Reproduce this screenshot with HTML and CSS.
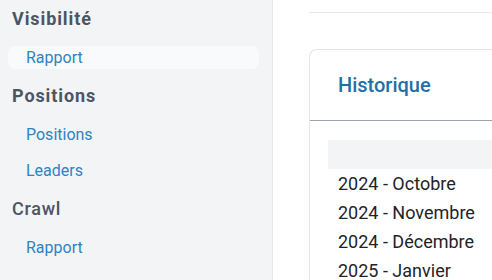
FILE: index.html
```html
<!DOCTYPE html>
<html lang="fr">
<head>
<meta charset="utf-8">
<link rel="stylesheet" href="styles.css">
</head>
<body>
<div class="layout">
  <aside class="sidebar">
    <div class="group-title">Visibilité</div>
    <a class="nav-item active">Rapport</a>
    <div class="group-title">Positions</div>
    <a class="nav-item">Positions</a>
    <a class="nav-item">Leaders</a>
    <div class="group-title light">Crawl</div>
    <a class="nav-item">Rapport</a>
  </aside>
  <main class="main">
    <div class="topbar"></div>
    <section class="card">
      <div class="card-header">Historique</div>
      <div class="card-body">
        <div class="table-head"></div>
        <div class="row">2024 - Octobre</div>
        <div class="row">2024 - Novembre</div>
        <div class="row">2024 - Décembre</div>
        <div class="row">2025 - Janvier</div>
      </div>
    </section>
  </main>
</div>
</body>
</html>
```
FILE: styles.css
```css
* { box-sizing: border-box; }
html, body { margin: 0; padding: 0; }
body {
  font-family: Roboto, "Liberation Sans", sans-serif;
  background: #ffffff;
  width: 492px;
  height: 280px;
  overflow: hidden;
}
.layout {
  display: flex;
  height: 280px;
}
.sidebar {
  width: 273px;
  flex: none;
  background: #f3f4f6;
  border-right: 1px solid #e8eaed;
  padding: 9px 13px 0 8px;
  display: flex;
  flex-direction: column;
}
.group-title {
  font-weight: 700;
  font-size: 18px;
  letter-spacing: 0.05em;
  color: #4b5563;
  padding-left: 4px;
  height: 20px;
  line-height: 20px;
  margin: 4px 0 17px;
}
.group-title:first-child {
  margin-top: 0;
}
.group-title.light {
  font-weight: 500;
  letter-spacing: 0.04em;
}
.nav-item {
  display: block;
  font-size: 16px;
  color: #2d83c4;
  padding-left: 18px;
  height: 23px;
  line-height: 23px;
  border-radius: 7px;
  margin-bottom: 13px;
}
.nav-item.active {
  background: #f9fafb;
}
.main {
  flex: 1;
  padding: 12px 0 0 36px;
  min-width: 0;
}
.topbar {
  border-top: 1px solid #e5e7eb;
  height: 37px;
}
.card {
  border: 1px solid #e3e5e8;
  border-right: none;
  border-radius: 8px 0 0 0;
  height: 240px;
}
.card-header {
  height: 71px;
  padding-left: 28px;
  display: flex;
  align-items: center;
  font-size: 20px;
  font-weight: 500;
  color: #1f6fa8;
  border-bottom: 1px solid #9ca3af;
}
.card-body {
  padding: 19px 0 0 18px;
}
.table-head {
  height: 29px;
  background: #f3f4f6;
}
.row {
  height: 29px;
  line-height: 29px;
  padding-left: 10px;
  font-size: 18px;
  color: #1f2328;
}
```
